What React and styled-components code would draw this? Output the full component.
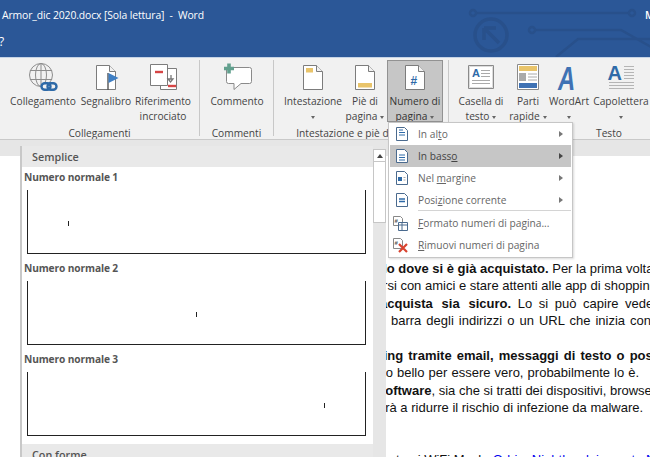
import React from "react";
import styled, { createGlobalStyle } from "styled-components";

const Global = createGlobalStyle`
  html, body { margin: 0; padding: 0; width: 650px; height: 457px; overflow: hidden; background: #fff; }
`;
const ui = `"Open Sans", "Noto Sans", "Liberation Sans", sans-serif`;

const Page = styled.div`
  position: relative; width: 650px; height: 457px; overflow: hidden; display: flex; flex-direction: column;
  font-family: ${ui};
`;
const TitleBar = styled.header`
  position: relative; height: 57px; flex: none; background: #2b5797; border-bottom: 1px solid #c5d3e6;
  color: #fff; overflow: hidden; font-size: 10.4px; letter-spacing: -0.12px;
`;
const Circuit = styled.svg`position: absolute; inset: 0;`;
const TitleRow = styled.div`
  position: relative; height: 30px; display: flex; align-items: center; padding-left: 2px; line-height: 30px; white-space: pre;
`;
const UserName = styled.span`margin-left: auto; width: 5px; overflow: hidden; font-weight: 600;`;
const TabRow = styled.div`position: relative; height: 24px; line-height: 24px; font-size: 12px; margin-left: -1px;`;

const Ribbon = styled.nav`
  flex: none; display: flex; background: #f1f1f1; border-bottom: 1px solid #c9c9c9; padding-top: 2px;
  box-sizing: border-box; height: 82px; overflow: hidden; color: #444; font-size: 10.2px;
`;
const Group = styled.section`
  flex: none; box-sizing: border-box; width: ${p => p.$w}px; padding-left: ${p => p.$pad}px; position: relative;
  display: flex; flex-direction: column; height: 76px; border-right: ${p => (p.$end ? "none" : "1px solid #c8c8c8")};
`;
const GroupRow = styled.div`display: flex; flex: none; height: 66px;`;
const GroupLabel = styled.div`
  flex: none; margin-left: -${p => p.$pad}px; text-align: center; line-height: 15px; height: 15px; white-space: nowrap; color: #444;
`;
const RibbonBtn = styled.div`
  flex: none; width: ${p => p.$w}px; box-sizing: border-box; height: 62px; display: flex; flex-direction: column; align-items: center;
  padding-top: 2px; text-align: center; line-height: 15px; white-space: nowrap;
  background: ${p => (p.$active ? "#c6c6c6" : "transparent")};
  outline: ${p => (p.$active ? "1px solid #929292" : "none")}; outline-offset: -1px;
  color: ${p => (p.$active ? "#333" : "#444")};
`;
const IconBox = styled.svg`flex: none; display: block; margin-bottom: 0;`;
const Caret = styled.i`
  display: inline-block; width: 0; height: 0; border: 2.5px solid transparent; border-top: 3px solid #666; border-bottom: 0;
  vertical-align: middle; margin-left: ${p => (p.$solo ? 0 : 3)}px;
`;

const Workspace = styled.main`flex: 1; background: #fff; display: flex; flex-direction: column; min-height: 0;`;
const RulerBand = styled.div`height: 16px; flex: none; background: #e6e6e6;`;
const Doc = styled.article`
  padding: 103.5px 0 0 386px; font-family: "Liberation Sans", Arial, sans-serif; font-size: 13px; line-height: 17.5px; color: #111;
`;
const Clip = styled.div`overflow: hidden; width: 264px;`;
const Line = styled.p`
  margin: 0; margin-top: ${p => p.$gap || 0}px; white-space: nowrap; text-indent: ${p => p.$in}px;
  word-spacing: ${p => p.$ws || 0}px;
`;
const Strong = styled.b`font-weight: 700; word-spacing: ${p => (p.$ws ? `${p.$ws}px` : "inherit")};`;
const Link = styled.span`color: #0000ee;`;

const Gallery = styled.aside`
  position: absolute; left: 20px; top: 146px; width: 366px; height: 311px; display: flex; background: #e6e6e6;
  border-left: 2px solid #c8c8c8; box-sizing: border-box; overflow: hidden;
`;
const GalleryList = styled.div`width: 351px; flex: none; background: #fff; display: flex; flex-direction: column; gap: 5px;`;
const GalleryHead = styled.div`
  height: 21px; flex: none; background: #e9e9e9; box-sizing: border-box; padding: 1px 0 0 10px; line-height: 20px;
  font-size: 10.8px; font-weight: 600; color: #555; margin-top: ${p => p.$mt || 0}px; margin-bottom: -4px;
`;
const Entry = styled.div`display: flex; flex-direction: column; gap: 4px;`;
const EntryLabel = styled.div`
  height: 18px; line-height: 18px; padding-left: 2px; font-size: 10.2px; letter-spacing: -0.12px; font-weight: 700; color: #555;
`;
const Preview = styled.div`
  margin-left: 5px; width: 339px; height: 64px; box-sizing: border-box; border: 1px solid #222; border-top: 0;
`;
const Marker = styled.div`width: 1px; height: 5px; background: #222; margin: 31px 0 0 ${p => p.$at}px;`;
const ScrollBar = styled.div`width: 13px; flex: none; padding-top: 3px; display: flex; flex-direction: column;`;
const ScrollUp = styled.div`
  height: 13px; background: #fff; border: 1px solid #c6c6c6; box-sizing: border-box; display: flex; align-items: center; justify-content: center;
`;
const UpArrow = styled.i`width: 0; height: 0; border: 3px solid transparent; border-bottom: 4px solid #444; border-top: 0;`;
const Thumb = styled.div`height: 61px; background: #fff; border: 1px solid #c6c6c6; border-top: 0; box-sizing: border-box;`;

const Menu = styled.div`
  position: absolute; left: 388px; top: 122px; width: 185px; height: 136px; box-sizing: border-box; background: #fff;
  border: 1px solid #c6c6c6; box-shadow: 1px 1px 2px rgba(0,0,0,.15); padding: 0 1px; display: flex; flex-direction: column;
  font-size: 10.2px; color: #666;
`;
const MenuItem = styled.div`
  height: ${p => p.$h || 22}px; flex: none; display: flex; align-items: center; padding-right: 8px; white-space: nowrap;
  background: ${p => (p.$on ? "#c6c6c6" : "transparent")}; color: ${p => (p.$on ? "#444" : "#666")};
  u { text-underline-offset: 1px; }
`;
const MenuIcon = styled.svg`flex: none; width: 16px; height: 16px; margin: 0 ${p => 12 - (p.$nudge || 0)}px 0 ${p => p.$nudge || 2}px;`;
const MenuText = styled.span`flex: 1;`;
const MenuArrow = styled.i`width: 0; height: 0; border: 3.5px solid transparent; border-left: 4px solid ${p => (p.$on ? "#444" : "#777")}; border-right: 0;`;
const MenuSep = styled.hr`margin: 0 0 1px 28px; border: 0; border-top: 1px solid #d4d4d4; height: 0; flex: none;`;

const G = "#7c7c7c", B = "#2e6aa8", Y = "#e9c46a";
const Page32 = ({ children }) => (
  <>
    <path d="M6.5 3.5h13l6 6v18h-19z" fill="#fff" stroke={G} />
    <path d="M19.5 3.5v6h6" fill="#f1f1f1" stroke={G} />
    {children}
  </>
);
const Glyph = styled.text`font-family: "Liberation Sans", sans-serif; font-weight: 700; font-style: ${p => (p.$it ? "italic" : "normal")};`;

const Icons = {
  link: (
    <>
      <g fill="none" stroke="#8d8d8d">
        <circle cx="14" cy="13" r="11.5" />
        <ellipse cx="14" cy="13" rx="5.5" ry="11.5" />
        <path d="M14 1.5v23M3 8.5h22M3 17.5h22" />
      </g>
      <g fill="none" stroke={B} strokeWidth="2.4">
        <rect x="14.5" y="21.2" width="9" height="6.6" rx="3.3" fill="#f1f1f1" />
        <rect x="20.5" y="21.2" width="9" height="6.6" rx="3.3" />
      </g>
    </>
  ),
  bookmark: (
    <Page32>
      <path d="M18 11v17" stroke="#555" strokeWidth="1.4" />
      <path d="M18.5 11l10 5-10 5z" fill="#3f7fc4" />
    </Page32>
  ),
  xref: (
    <>
      <path d="M13.5 6.5h16v21h-16z" fill="#fff" stroke={G} />
      <path d="M3.5 2.5h17v21h-17z" fill="#fff" stroke={G} />
      <path d="M8 10h8" stroke="#d64545" strokeWidth="2.4" />
      <path d="M21 24h8" stroke="#d64545" strokeWidth="2.4" />
      <path d="M24 13v4h-3l2.5 3 2.5-3h-2" fill="none" stroke="#777" strokeWidth="1.3" />
    </>
  ),
  comment: (
    <>
      <path d="M5.5 5.5h23a2 2 0 0 1 2 2v12a2 2 0 0 1-2 2H20l-7 6v-6H7.5a2 2 0 0 1-2-2z" fill="#fff" stroke="#8a8a8a" />
      <path d="M8 1.5v10M3 6.5h10" stroke="#62a08e" strokeWidth="3.6" />
    </>
  ),
  header: (
    <Page32>
      <rect x="9" y="6" width="7" height="4.5" fill={Y} />
    </Page32>
  ),
  footer: (
    <Page32>
      <rect x="9" y="21" width="14" height="4.5" fill={Y} />
    </Page32>
  ),
  number: (
    <Page32>
      <Glyph x="11.5" y="23" fontSize="12" fill={B}>#</Glyph>
    </Page32>
  ),
  textbox: (
    <>
      <path d="M3.5 3.5h25v23h-25z" fill="#fff" stroke="#8a8a8a" />
      <path d="M4.5 4.5h23v21h-23z" fill="none" stroke="#dcdcdc" />
      <Glyph x="7" y="15" fontSize="11" fill={B}>A</Glyph>
      <path d="M16 8.5h9M16 11.5h9M16 14.5h9M7 18.5h18M7 21.5h18" stroke="#aaa" />
    </>
  ),
  parts: (
    <>
      <path d="M5.5 2.5h21v25h-21z" fill="#fff" stroke="#8a8a8a" />
      <rect x="7" y="4" width="18" height="5" fill={Y} />
      <rect x="7" y="11" width="7" height="8" fill="#aaa" />
      <path d="M16 12h9M16 15h9M16 18h9" stroke="#aaa" />
      <rect x="7" y="21" width="18" height="5" fill="#3f72b4" />
    </>
  ),
  wordart: <Glyph $it transform="translate(5 28) scale(.85 1.2)" x="0" y="0" fontSize="28" fill="#3f72b4">A</Glyph>,
  dropcap: (
    <>
      <Glyph x="2.5" y="18" fontSize="20" fill={B}>A</Glyph>
      <path d="M19 4.5h10M19 7.5h10M19 10.5h10M19 13.5h10M19 16.5h10M4 20.5h25M4 23.5h25M4 26.5h25" stroke="#b5b5b5" />
    </>
  ),
};

const RIcon = ({ name }) => (
  <IconBox width="32" height="32" viewBox="0 0 32 32">{Icons[name]}</IconBox>
);

const M16 = ({ children, nudge }) => (
  <MenuIcon $nudge={nudge} viewBox="0 0 16 16">{children}</MenuIcon>
);
const SmallPage = ({ children }) => (
  <>
    <path d="M2.5 1.5h8l3 3v10h-11z" fill="#fff" stroke="#4a6a8e" />
    {children}
  </>
);

const Btn = ({ w, icon, l1, l2, caret, active }) => (
  <RibbonBtn $w={w} $active={active}>
    <RIcon name={icon} />
    <div>{l1}</div>
    <div>
      {l2}
      {caret && <Caret $solo={!l2} />}
    </div>
  </RibbonBtn>
);

const Entries = [
  ["Numero normale 1", 40],
  ["Numero normale 2", 168],
  ["Numero normale 3", 296],
];

export default function App() {
  return (
    <Page>
      <Global />
      <TitleBar>
        <Circuit width="650" height="57" viewBox="0 0 650 57" fill="none" stroke="#28508b" strokeWidth="2.5">
          <path d="M476 13h153M536 30h85l30 17M650 39h-72l-22 18" />
          <circle cx="473" cy="13" r="3" />
          <circle cx="632" cy="13" r="3" />
          <circle cx="532" cy="30" r="3" />
          <circle cx="491" cy="35" r="16" strokeWidth="3.5" />
          <path d="M484 28h12M484 28v12M485 29l14 14" strokeWidth="3.5" />
        </Circuit>
        <TitleRow>
          Armor_dic 2020.docx [Sola lettura]  -  Word
          <UserName>Marco</UserName>
        </TitleRow>
        <TabRow>?</TabRow>
      </TitleBar>

      <Ribbon>
        <Group $w={200} $pad={8}>
          <GroupRow>
            <Btn w={70} icon="link" l1="Collegamento" />
            <Btn w={56} icon="bookmark" l1="Segnalibro" />
            <Btn w={58} icon="xref" l1="Riferimento" l2="incrociato" />
          </GroupRow>
          <GroupLabel $pad={8}>Collegamenti</GroupLabel>
        </Group>
        <Group $w={74} $pad={5}>
          <GroupRow>
            <Btn w={64} icon="comment" l1="Commento" />
          </GroupRow>
          <GroupLabel $pad={5}>Commenti</GroupLabel>
        </Group>
        <Group $w={175} $pad={9}>
          <GroupRow>
            <Btn w={60} icon="header" l1="Intestazione" caret />
            <Btn w={44} icon="footer" l1="Piè di" l2="pagina" caret />
            <Btn w={56} icon="number" l1="Numero di" l2="pagina" caret active />
          </GroupRow>
          <GroupLabel $pad={9}>Intestazione e piè di pagina</GroupLabel>
        </Group>
        <Group $w={320} $pad={6} $end>
          <GroupRow>
            <Btn w={52} icon="textbox" l1="Casella di" l2="testo" caret />
            <Btn w={42} icon="parts" l1="Parti" l2="rapide" caret />
            <Btn w={40} icon="wordart" l1="WordArt" caret />
            <Btn w={64} icon="dropcap" l1="Capolettera" caret />
          </GroupRow>
          <GroupLabel $pad={6}>Testo</GroupLabel>
        </Group>
      </Ribbon>

      <Workspace>
        <RulerBand />
        <Doc>
          <Clip>
            <Line $in={-18}>
              <Strong>solo dove si è già acquistato.</Strong> Per la prima volta
            </Line>
            <Line $in={-21}>marsi con amici e stare attenti alle app di shopping</Line>
            <Line $in={-6} $ws={3}>
              <Strong $ws={5.2}>acquista sia sicuro.</Strong> Lo si può capire vedendo
            </Line>
            <Line $in={5} $ws={1.4}>barra degli indirizzi o un URL che inizia con</Line>
            <Line $in={-37} $gap={17} $ws={1.5}>
              <Strong>phishing tramite email, messaggi di testo o post</Strong>
            </Line>
            <Line $in={-30} $ws={0.5}>troppo bello per essere vero, probabilmente lo è.</Line>
            <Line $in={-8}>
              <Strong>software</Strong>, sia che si tratti dei dispositivi, browser
            </Line>
            <Line $in={-29}>aiuterà a ridurre il rischio di infezione da malware.</Line>
            <Line $in={10} $gap={34}>
              temi WiFi Mesh: <Link>Orbi e Nighthawk in punto Ni</Link>
            </Line>
          </Clip>
        </Doc>
      </Workspace>

      <Gallery>
        <GalleryList>
          <GalleryHead>Semplice</GalleryHead>
          {Entries.map(([label, at]) => (
            <Entry key={label}>
              <EntryLabel>{label}</EntryLabel>
              <Preview>
                <Marker $at={at} />
              </Preview>
            </Entry>
          ))}
          <GalleryHead $mt={3}>Con forme</GalleryHead>
        </GalleryList>
        <ScrollBar>
          <ScrollUp><UpArrow /></ScrollUp>
          <Thumb />
        </ScrollBar>
      </Gallery>

      <Menu>
        <MenuItem>
          <M16 nudge={4}><SmallPage><path d="M5 4h4M5 6.5h6M5 9h6" stroke="#2e6aa8" /></SmallPage></M16>
          <MenuText>In al<u>t</u>o</MenuText><MenuArrow />
        </MenuItem>
        <MenuItem $on>
          <M16 nudge={4}><SmallPage><path d="M5 7h6M5 9.5h6M5 12h6" stroke="#2e6aa8" /></SmallPage></M16>
          <MenuText>In bass<u>o</u></MenuText><MenuArrow $on />
        </MenuItem>
        <MenuItem>
          <M16 nudge={4}><SmallPage><rect x="4" y="7" width="4" height="4" fill="#2e6aa8" /><path d="M9.5 7.5h2M9.5 10h2" stroke="#aaa" /></SmallPage></M16>
          <MenuText>Nel <u>m</u>argine</MenuText><MenuArrow />
        </MenuItem>
        <MenuItem $h={21}>
          <M16 nudge={4}><SmallPage><path d="M5 7h6M5 9.5h6" stroke="#2e6aa8" strokeWidth="1.3" /></SmallPage></M16>
          <MenuText>Posi<u>z</u>ione corrente</MenuText><MenuArrow />
        </MenuItem>
        <MenuSep />
        <MenuItem>
          <M16 nudge={2}>
            <path d="M1.5 1.5h7l2 2v7h-9z" fill="#fff" stroke="#888" />
            <Glyph x="2.5" y="8" fontSize="6" fill="#555">#</Glyph>
            <path d="M6.5 7.5h9v8h-9zM6.5 10h9M10 7.5v8" fill="#fff" stroke="#4a6a8e" />
          </M16>
          <MenuText><u>F</u>ormato numeri di pagina...</MenuText>
        </MenuItem>
        <MenuItem $h={21}>
          <M16 nudge={2}>
            <path d="M1.5 1.5h7l2 2v8h-9z" fill="#fff" stroke="#888" />
            <Glyph x="2.5" y="8" fontSize="6" fill="#555">#</Glyph>
            <path d="M7 7l8 8M15 7l-8 8" stroke="#d8432f" strokeWidth="2.2" />
          </M16>
          <MenuText><u>R</u>imuovi numeri di pagina</MenuText>
        </MenuItem>
      </Menu>
    </Page>
  );
}
